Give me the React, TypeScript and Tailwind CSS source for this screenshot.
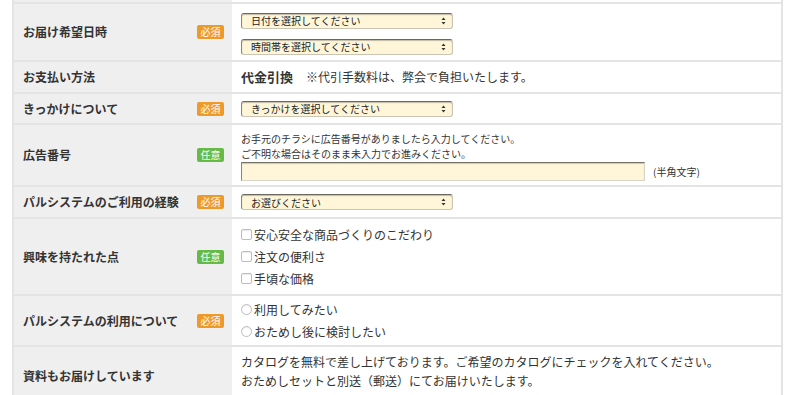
import React from 'react';

const font = { fontFamily: '"Hiragino Kaku Gothic ProN", "Noto Sans CJK JP", "Noto Sans", sans-serif' };

const Badge: React.FC<{ kind: 'req' | 'opt' }> = ({ kind }) => (
    <span
        className={`inline-flex items-center justify-center w-[27px] h-[14px] rounded-[2px] text-[10px] leading-none text-white ${
            kind === 'req' ? 'bg-[#ee9a2b]' : 'bg-[#66bb47]'
        }`}
    >
        {kind === 'req' ? '必須' : '任意'}
    </span>
);

const Select: React.FC<{ label: string }> = ({ label }) => (
    <div className="relative w-[212px] h-[16px] rounded-[3px] bg-[#fff6da] border border-[#c9c4b4] border-t-[#6b6860] border-l-[#8a867c] shadow-[inset_0_1px_1px_rgba(0,0,0,0.25)] flex items-center pl-[9px] text-[10px] text-[#222]">
        {label}
        <svg className="absolute right-[6px] top-[3px]" width="5" height="8" viewBox="0 0 5 8">
            <path d="M0.5 3 L2.5 0.5 L4.5 3 Z" fill="#333" />
            <path d="M0.5 5 L2.5 7.5 L4.5 5 Z" fill="#333" />
        </svg>
    </div>
);

const Row: React.FC<{ h: string; label: string; badge?: 'req' | 'opt'; children?: React.ReactNode }> = ({ h, label, badge, children }) => (
    <div className={`flex border-b-2 border-[#e4e4e4] ${h}`}>
        <div className="w-[218px] shrink-0 bg-[#efefef] flex items-center justify-between pl-[9px] pr-[8px]">
            <span className="text-[12px] font-bold text-[#333]">{label}</span>
            {badge && <Badge kind={badge} />}
        </div>
        <div className="flex-1 flex flex-col justify-center pl-[9px] text-[#333]">{children}</div>
    </div>
);

const Check: React.FC<{ label: string; radio?: boolean }> = ({ label, radio }) => (
    <div className="flex items-center text-[12px] leading-[22px]">
        <span
            className={`inline-block w-[11px] h-[11px] mr-[2px] border border-[#bdbdbd] bg-white shadow-[inset_0_1px_1px_rgba(0,0,0,0.08)] ${radio ? 'rounded-full' : 'rounded-[2px]'}`}
        />
        {label}
    </div>
);

const App: React.FC = () => {
    return (
        <div className="w-[798px] h-[395px] overflow-hidden bg-white" style={font}>
            <div className="ml-[12px] w-[771px] border-l-2 border-r-2 border-[#e4e4e4]">
                {/* 前の行の終わり */}
                <div className="flex h-[4px] border-b-2 border-[#e4e4e4]">
                    <div className="w-[218px] bg-[#efefef]" />
                </div>

                <Row h="h-[58px]" label="お届け希望日時" badge="req">
                    <div className="flex flex-col gap-[10px] pt-[3px]">
                        <Select label="日付を選択してください" />
                        <Select label="時間帯を選択してください" />
                    </div>
                </Row>

                <Row h="h-[32px]" label="お支払い方法">
                    <div className="flex items-center text-[12px]">
                        <span className="font-bold text-[13px] mr-[13px]">代金引換</span>
                        <span>※代引手数料は、弊会で負担いたします。</span>
                    </div>
                </Row>

                <Row h="h-[31px]" label="きっかけについて" badge="req">
                    <Select label="きっかけを選択してください" />
                </Row>

                <Row h="h-[62px]" label="広告番号" badge="opt">
                    <div className="text-[10px] leading-[15px] pt-[2px]">
                        <p>お手元のチラシに広告番号がありましたら入力してください。</p>
                        <p>ご不明な場合はそのまま未入力でお進みください。</p>
                        <div className="flex items-center mt-[1px]">
                            <div className="w-[404px] h-[19px] bg-[#fff6da] border border-[#d8d4c8] border-t-[#76736b] border-l-[#8a867c] shadow-[inset_0_1px_1px_rgba(0,0,0,0.2)]" />
                            <span className="ml-[8px] text-[10px]">(半角文字)</span>
                        </div>
                    </div>
                </Row>

                <Row h="h-[32px]" label="パルシステムのご利用の経験" badge="req">
                    <Select label="お選びください" />
                </Row>

                <Row h="h-[77px]" label="興味を持たれた点" badge="opt">
                    <Check label="安心安全な商品づくりのこだわり" />
                    <Check label="注文の便利さ" />
                    <Check label="手頃な価格" />
                </Row>

                <Row h="h-[51px]" label="パルシステムの利用について" badge="req">
                    <Check radio label="利用してみたい" />
                    <Check radio label="おためし後に検討したい" />
                </Row>

                <Row h="h-[60px]" label="資料もお届けしています">
                    <div className="text-[12px] leading-[19px] -mt-[10px]">
                        <p>カタログを無料で差し上げております。ご希望のカタログにチェックを入れてください。</p>
                        <p>おためしセットと別送（郵送）にてお届けいたします。</p>
                    </div>
                </Row>
            </div>
        </div>
    );
};

export default App;
